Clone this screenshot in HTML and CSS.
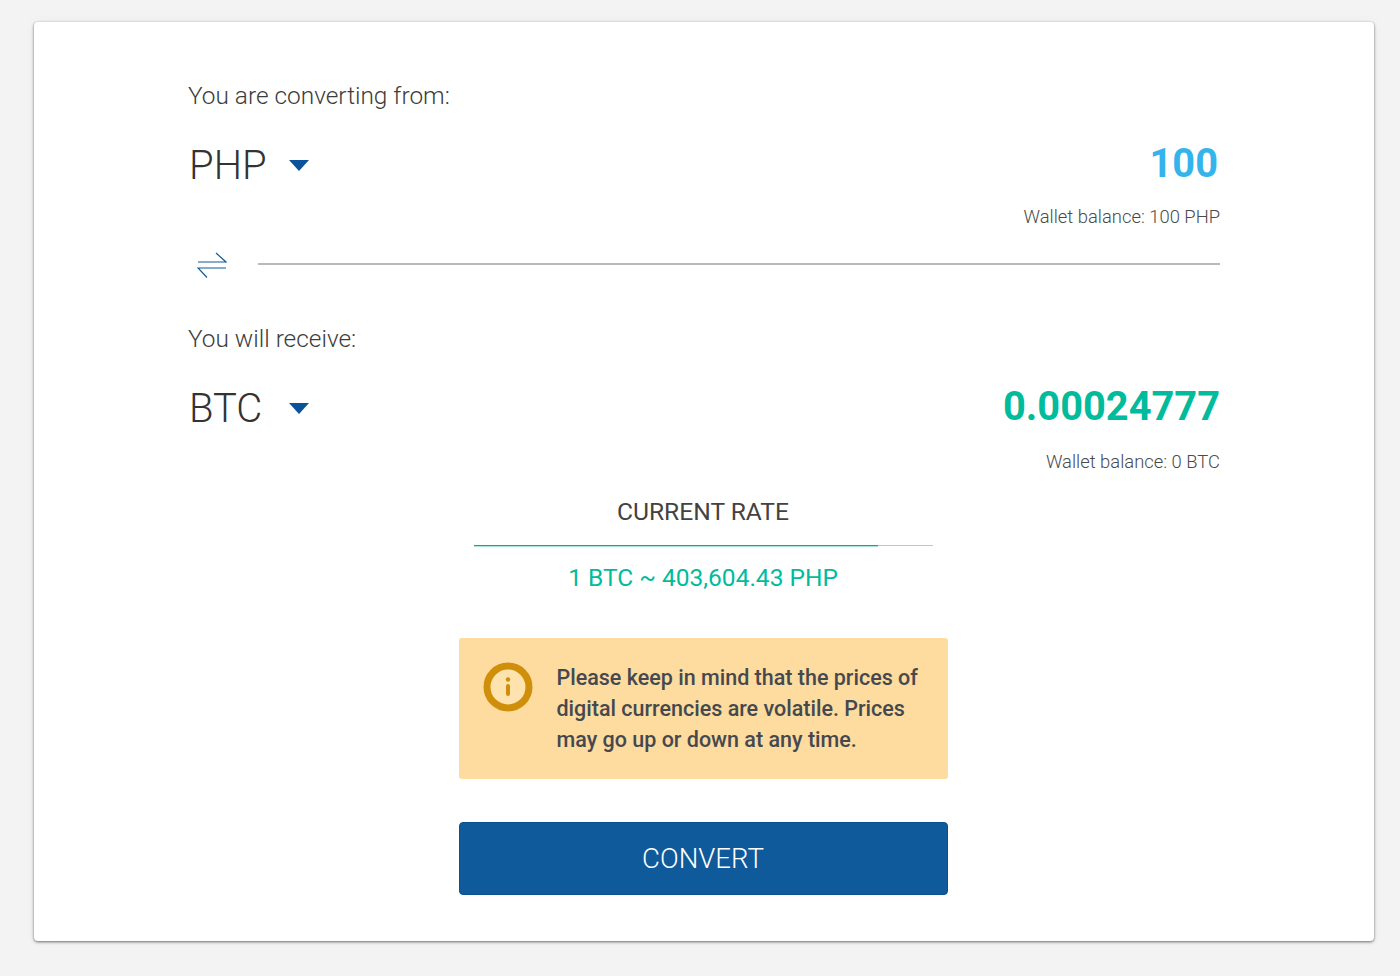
FILE: index.html
```html
<!DOCTYPE html>
<html lang="en">
<head>
<meta charset="utf-8">
<title>Convert</title>
<link rel="stylesheet" href="styles.css">
</head>
<body>
<main class="card">
  <section class="side">
    <p class="label">You are converting from:</p>
    <div class="row">
      <div class="currency"><span class="code">PHP</span><span class="caret"></span></div>
      <span class="amount amount-from">100</span>
    </div>
    <p class="balance">Wallet balance: 100 PHP</p>
  </section>
  <div class="swap">
    <svg class="swap-icon" width="30" height="28" viewBox="0 0 30 28" fill="none" stroke="#0f5a9b" stroke-width="1.2">
      <path d="M1 12H29L19 3"/>
      <path d="M29 18H1L10 27.5"/>
    </svg>
    <div class="swap-line"></div>
  </div>
  <section class="side side-to">
    <p class="label">You will receive:</p>
    <div class="row">
      <div class="currency"><span class="code">BTC</span><span class="caret"></span></div>
      <span class="amount amount-to">0.00024777</span>
    </div>
    <p class="balance">Wallet balance: 0 BTC</p>
  </section>
  <section class="rate">
    <h2 class="rate-title">CURRENT RATE</h2>
    <div class="rate-bar"><div class="rate-fill"></div></div>
    <p class="rate-value">1 BTC ~ 403,604.43 PHP</p>
  </section>
  <div class="notice">
    <svg class="notice-icon" width="50" height="50" viewBox="0 0 50 50">
      <circle cx="25" cy="25" r="24.5" fill="#ffe9bd"/>
      <circle cx="25" cy="25" r="21" fill="#ffe3ae" stroke="#d08f0a" stroke-width="7"/>
      <circle cx="25" cy="17.5" r="2.2" fill="#d08f0a"/>
      <rect x="23" y="22" width="4" height="12" rx="2" fill="#d08f0a"/>
    </svg>
    <p class="notice-text">Please keep in mind that the prices of digital currencies are volatile. Prices may go up or down at any time.</p>
  </div>
  <button class="convert" type="button">CONVERT</button>
</main>
</body>
</html>
```
FILE: styles.css
```css
* { box-sizing: border-box; }
html, body { margin: 0; height: 976px; overflow: hidden; }
body {
  background: #f3f3f3;
  padding: 22px 26px 35px 34px;
  font-family: Roboto, "Liberation Sans", sans-serif;
  color: #3c3c3c;
}
p, h2 { margin: 0; }
.card {
  height: 919px;
  background: #fff;
  border-radius: 4px;
  box-shadow: 0 1px 3px rgba(0, 0, 0, 0.55), 0 0 12px rgba(0, 0, 0, 0.04);
  padding: 59px 154px 46px;
  display: flex;
  flex-direction: column;
  align-items: center;
}
.side { width: 100%; }
.side-to { margin-top: 43px; }
.label { font-size: 24.4px; font-weight: 300; line-height: 30px; }
.row {
  display: flex;
  justify-content: space-between;
  align-items: center;
  margin-top: 28px;
  height: 52px;
}
.currency { display: flex; align-items: center; padding-left: 1px; }
.code { width: 77px; padding-top: 2px; font-size: 40px; font-weight: 300; line-height: 52px; color: #333; }
.caret {
  width: 0;
  height: 0;
  margin-left: 23px;
  border-left: 10px solid transparent;
  border-right: 10px solid transparent;
  border-top: 11px solid #0a5299;
}
.amount { padding-bottom: 2px; font-size: 39.8px; font-weight: 700; line-height: 52px; }
.amount-from { padding-right: 2px; color: #35b4ec; }
.amount-to { color: #00bb9c; }
.balance {
  margin-top: 14px;
  text-align: right;
  font-size: 18.4px;
  font-weight: 300;
  line-height: 24px;
  color: #4a4a4a;
}
.side-to .balance { margin-top: 16px; }
.swap { width: 100%; display: flex; align-items: center; gap: 31px; margin-top: 18px; height: 34px; padding-left: 9px; }
.swap-line { flex: 1; height: 2px; background: #b9b9b9; }
.rate { width: 459px; margin-top: 23px; margin-right: 2px; text-align: center; }
.rate-title { font-size: 24.6px; font-weight: 400; line-height: 30px; color: #424242; }
.rate-bar { height: 1px; margin-top: 18px; background: #c4c4c4; }
.rate-fill { width: 88.2%; height: 1px; background: #00b294; box-shadow: 0 1px 0 rgba(0, 178, 148, 0.35); }
.rate-value { margin-top: 17px; font-size: 24.5px; line-height: 30px; color: #00bb9c; }
.notice {
  width: 489px;
  height: 141px;
  margin-top: 45px;
  margin-right: 2px;
  padding: 24px 20px 0 24px;
  background: #fedb9e;
  border-radius: 3px;
  display: flex;
  gap: 24px;
}
.notice-icon { flex: none; }
.notice-text { font-size: 21.5px; font-weight: 500; line-height: 31px; color: #45494f; }
.convert {
  width: 489px;
  height: 73px;
  margin-top: 43px;
  margin-right: 2px;
  background: #0f5a9b;
  border: 1px solid #0b5190;
  border-radius: 4px;
  color: #fff;
  font-family: inherit;
  font-size: 27.6px;
  font-weight: 300;
}
```
